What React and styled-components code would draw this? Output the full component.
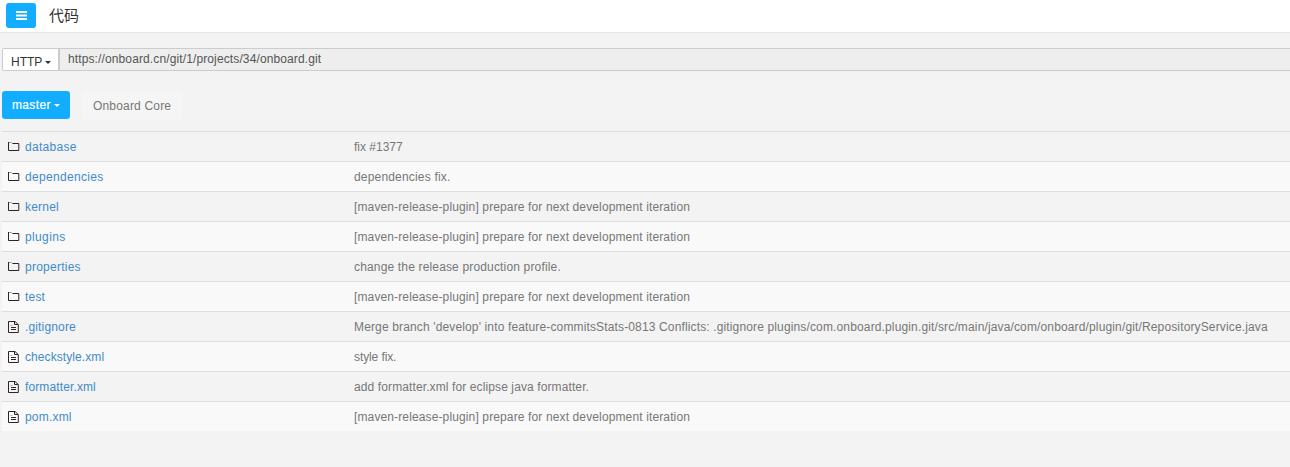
import React from "react";
import styled, { createGlobalStyle } from "styled-components";

const GlobalStyle = createGlobalStyle`
  * { box-sizing: border-box; }
  body {
    margin: 0;
    background: #f3f3f3;
    color: #777;
    font: 12px/20px "Liberation Sans", "Noto Sans CJK SC", sans-serif;
    overflow: hidden;
  }
  button { font: inherit; border: 0; margin: 0; padding: 0; }
`;

const Page = styled.div`
  height: 467px;
  overflow: hidden;
`;

const Header = styled.header`
  display: flex;
  align-items: flex-start;
  height: 33px;
  padding: 3px 6px;
  background: #fff;
  border-bottom: 1px solid #e4e7ea;
`;

const MenuButton = styled.button`
  display: flex;
  align-items: center;
  justify-content: center;
  width: 30px;
  height: 25px;
  border-radius: 3px;
  background: #12adff;
`;

const Title = styled.h1`
  margin: 0 0 0 13px;
  font: 15px/23px "Noto Sans CJK SC", sans-serif;
  color: #333;
`;

const CloneBar = styled.div`
  display: flex;
  height: 23px;
  margin: 15px 0 0 2px;
`;

const Protocol = styled.button`
  display: flex;
  align-items: center;
  width: 58px;
  padding: 4px 0 0 8px;
  border: 1px solid #ccc;
  border-right-width: 2px;
  border-radius: 2px 0 0 2px;
  background: #fff;
  color: #333;
  line-height: 18px;
`;

const Url = styled.div`
  flex: 1;
  padding: 0 8px;
  border: solid #ccc;
  border-width: 1px 0;
  background: #eee;
  color: #555;
  line-height: 20px;
`;

const Caret = styled.span`
  width: 0;
  height: 0;
  margin: ${(p) => p.$margin};
  border: solid transparent;
  border-width: 3px 3px 0;
  border-top-color: currentColor;
`;

const Toolbar = styled.div`
  display: flex;
  gap: 12px;
  height: 28px;
  margin: 20px 0 12px 2px;
`;

const BranchButton = styled.button`
  display: flex;
  align-items: center;
  width: 68px;
  padding-left: 10px;
  border-radius: 3px;
  background: #12adff;
  color: #fff;
  -webkit-text-stroke: 0.2px #fff;
`;

const Crumb = styled.div`
  width: 100px;
  padding-left: 11px;
  border-radius: 3px;
  background: #f5f5f5;
  line-height: 30px;
`;

const Text = styled.span`
  letter-spacing: ${(p) => p.$spacing || 0}px;
  white-space: nowrap;
`;

const FileList = styled.div`
  margin-left: 2px;
`;

const Row = styled.div`
  display: grid;
  grid-template-columns: 352px 1fr;
  height: 30px;
  border-top: 1px solid #ddd;
  line-height: 30px;
  &:nth-child(even) { background: #f9f9f9; }
`;

const NameCell = styled.div`
  display: flex;
  align-items: center;
  padding-left: 5px;
  color: #428bca;
`;

const IconSlot = styled.span`
  display: flex;
  width: 18px;
`;

const FolderIcon = () => (
  <svg width="13" height="10" viewBox="0 0 13 10" fill="none" stroke="#2d2328">
    <path d="M1.500 0V8.500H11.800V1.500H5.500" />
    <path d="M1.500 .5H4.500L5.500 1.500" strokeOpacity=".4" />
  </svg>
);

const FileIcon = () => (
  <svg width="13" height="12" viewBox="0 0 13 12" fill="none" stroke="#2d2328">
    <path d="M1.500 .5H8L11.300 3.500V11.500H1.500ZM7.500 .5V3.500H11M4 6.500H9M4 8.500H9" />
    <path d="M3.500 4.500H5.500" strokeOpacity=".35" />
  </svg>
);

const MenuIcon = () => (
  <svg width="11" height="9" viewBox="0 0 11 9" fill="#fff">
    <path d="M0 0H11V2H0ZM0 3.500H11V5.500H0ZM0 7H11V9H0Z" />
  </svg>
);

const release = "[maven-release-plugin] prepare for next development iteration";

const files = [
  { name: "database", nameSpacing: 0.3, message: "fix #1377", spacing: 0, folder: true },
  { name: "dependencies", nameSpacing: 0.33, message: "dependencies fix.", spacing: 0.18, folder: true },
  { name: "kernel", nameSpacing: 0.2, message: release, spacing: 0.128, folder: true },
  { name: "plugins", nameSpacing: 0.36, message: release, spacing: 0.128, folder: true },
  { name: "properties", nameSpacing: 0.25, message: "change the release production profile.", spacing: 0.16, folder: true },
  { name: "test", nameSpacing: 0.2, message: release, spacing: 0.128, folder: true },
  {
    name: ".gitignore",
    nameSpacing: 0.15,
    message:
      "Merge branch 'develop' into feature-commitsStats-0813 Conflicts: .gitignore plugins/com.onboard.plugin.git/src/main/java/com/onboard/plugin/git/RepositoryService.java",
    spacing: 0.141,
  },
  { name: "checkstyle.xml", nameSpacing: 0.08, message: "style fix.", spacing: -0.1 },
  { name: "formatter.xml", nameSpacing: 0.12, message: "add formatter.xml for eclipse java formatter.", spacing: 0.11 },
  { name: "pom.xml", nameSpacing: 0.2, message: release, spacing: 0.128 },
];

export default function App() {
  return (
    <Page>
      <GlobalStyle />
      <Header>
        <MenuButton aria-label="menu"><MenuIcon /></MenuButton>
        <Title>代码</Title>
      </Header>
      <CloneBar>
        <Protocol>
          <Text>HTTP</Text>
          <Caret $margin="1px 0 0 3px" />
        </Protocol>
        <Url><Text $spacing={0.12}>https://onboard.cn/git/1/projects/34/onboard.git</Text></Url>
      </CloneBar>
      <Toolbar>
        <BranchButton>
          <Text $spacing={0.35}>master</Text>
          <Caret $margin="1px 0 0 3px" />
        </BranchButton>
        <Crumb><Text $spacing={0.18}>Onboard Core</Text></Crumb>
      </Toolbar>
      <FileList>
        {files.map((f) => (
          <Row key={f.name}>
            <NameCell>
              <IconSlot>{f.folder ? <FolderIcon /> : <FileIcon />}</IconSlot>
              <Text $spacing={f.nameSpacing}>{f.name}</Text>
            </NameCell>
            <Text $spacing={f.spacing}>{f.message}</Text>
          </Row>
        ))}
      </FileList>
    </Page>
  );
}
